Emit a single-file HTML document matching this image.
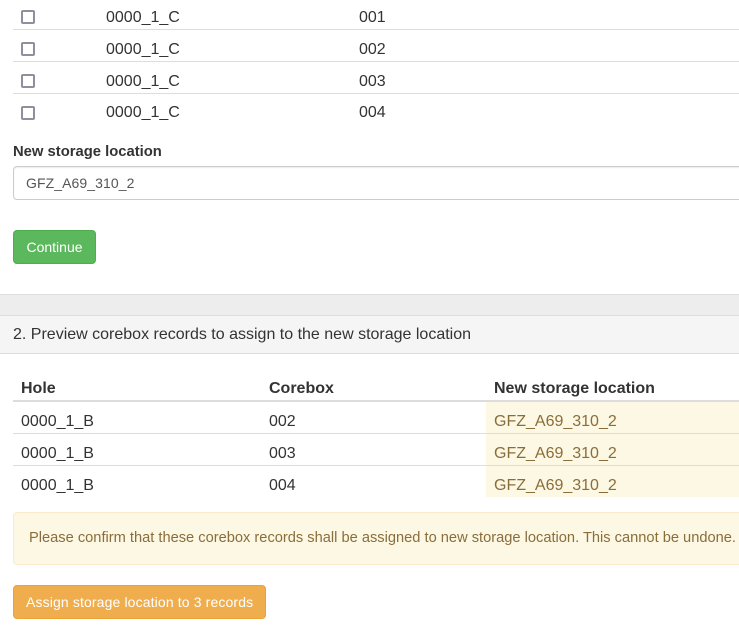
<!DOCTYPE html>
<html><head><meta charset="utf-8">
<style>
html,body{margin:0;padding:0;background:#fff;width:739px;height:625px;overflow:hidden}
body{position:relative;font-family:"Liberation Sans",Arial,sans-serif;color:#333}
.a{position:absolute;white-space:nowrap}
.t{font-size:16px;line-height:20px;color:#333}
.b{font-weight:bold}
.l{position:absolute;left:13px;width:726px;height:1px;background:#ddd}
.c{position:absolute;left:21px;width:10px;height:10px;border:2px solid #8f8f9d;border-radius:2px;background:#fff}
.y{color:#8a6d3b}
</style></head><body>
<div class="c" style="top:10px"></div>
<div class="a t" style="left:106px;top:8px">0000_1_C</div><div class="a t" style="left:359px;top:8px">001</div>
<div class="l" style="top:29px"></div>
<div class="c" style="top:42px"></div>
<div class="a t" style="left:106px;top:40px">0000_1_C</div><div class="a t" style="left:359px;top:40px">002</div>
<div class="l" style="top:61px"></div>
<div class="c" style="top:74px"></div>
<div class="a t" style="left:106px;top:72px">0000_1_C</div><div class="a t" style="left:359px;top:72px">003</div>
<div class="l" style="top:93px"></div>
<div class="c" style="top:106px"></div>
<div class="a t" style="left:106px;top:103px">0000_1_C</div><div class="a t" style="left:359px;top:103px">004</div>

<div class="a b" style="left:13px;top:142px;font-size:14.8px;line-height:20px">New storage location</div>
<div class="a" style="left:13px;top:166px;width:740px;height:32px;border:1px solid #ccc;border-radius:4px;box-shadow:inset 0 1px 1px rgba(0,0,0,.075);background:#fff"></div>
<div class="a" style="left:26px;top:173px;font-size:14px;line-height:20px;color:#555;letter-spacing:.08px">GFZ_A69_310_2</div>

<div class="a" style="left:13px;top:230px;width:81px;height:32px;background:#5cb85c;border:1px solid #4cae4c;border-radius:4px;color:#fff;font-size:14px;line-height:32px;text-align:center">Continue</div>

<div class="a" style="left:0;top:294px;width:739px;height:21px;background:#ededed;border-top:1px solid #ddd;box-sizing:border-box"></div>
<div class="a" style="left:0;top:315px;width:739px;height:39px;background:#f5f5f5;border-top:1px solid #ddd;border-bottom:1px solid #ddd;box-sizing:border-box"></div>
<div class="a t" style="left:13px;top:325px">2. Preview corebox records to assign to the new storage location</div>

<div class="a t b" style="left:21px;top:379px">Hole</div>
<div class="a t b" style="left:269px;top:379px">Corebox</div>
<div class="a t b" style="left:494px;top:379px">New storage location</div>

<div class="a" style="left:486px;top:402px;width:253px;height:95px;background:#fcf8e3"></div>
<div class="l" style="top:400px;height:2px"></div>
<div class="l" style="top:433px"></div>
<div class="l" style="top:465px"></div>

<div class="a t" style="left:21px;top:412px">0000_1_B</div><div class="a t" style="left:269px;top:412px">002</div><div class="a t y" style="left:494px;top:412px">GFZ_A69_310_2</div>
<div class="a t" style="left:21px;top:444px">0000_1_B</div><div class="a t" style="left:269px;top:444px">003</div><div class="a t y" style="left:494px;top:444px">GFZ_A69_310_2</div>
<div class="a t" style="left:21px;top:476px">0000_1_B</div><div class="a t" style="left:269px;top:476px">004</div><div class="a t y" style="left:494px;top:476px">GFZ_A69_310_2</div>

<div class="a" style="left:13px;top:512px;width:740px;height:51px;background:#fcf8e3;border:1px solid #faebcc;border-radius:4px"></div>
<div class="a" style="left:29px;top:528px;font-size:14.65px;line-height:20px;color:#8a6d3b">Please confirm that these corebox records shall be assigned to new storage location. This cannot be undone.</div>

<div class="a" style="left:13px;top:585px;width:251px;height:32px;background:#f0ad4e;border:1px solid #eea236;border-radius:4px"></div>
<div class="a" style="left:26px;top:592px;color:#fff;font-size:14px;line-height:20px;letter-spacing:.13px">Assign storage location to 3 records</div>
</body></html>
